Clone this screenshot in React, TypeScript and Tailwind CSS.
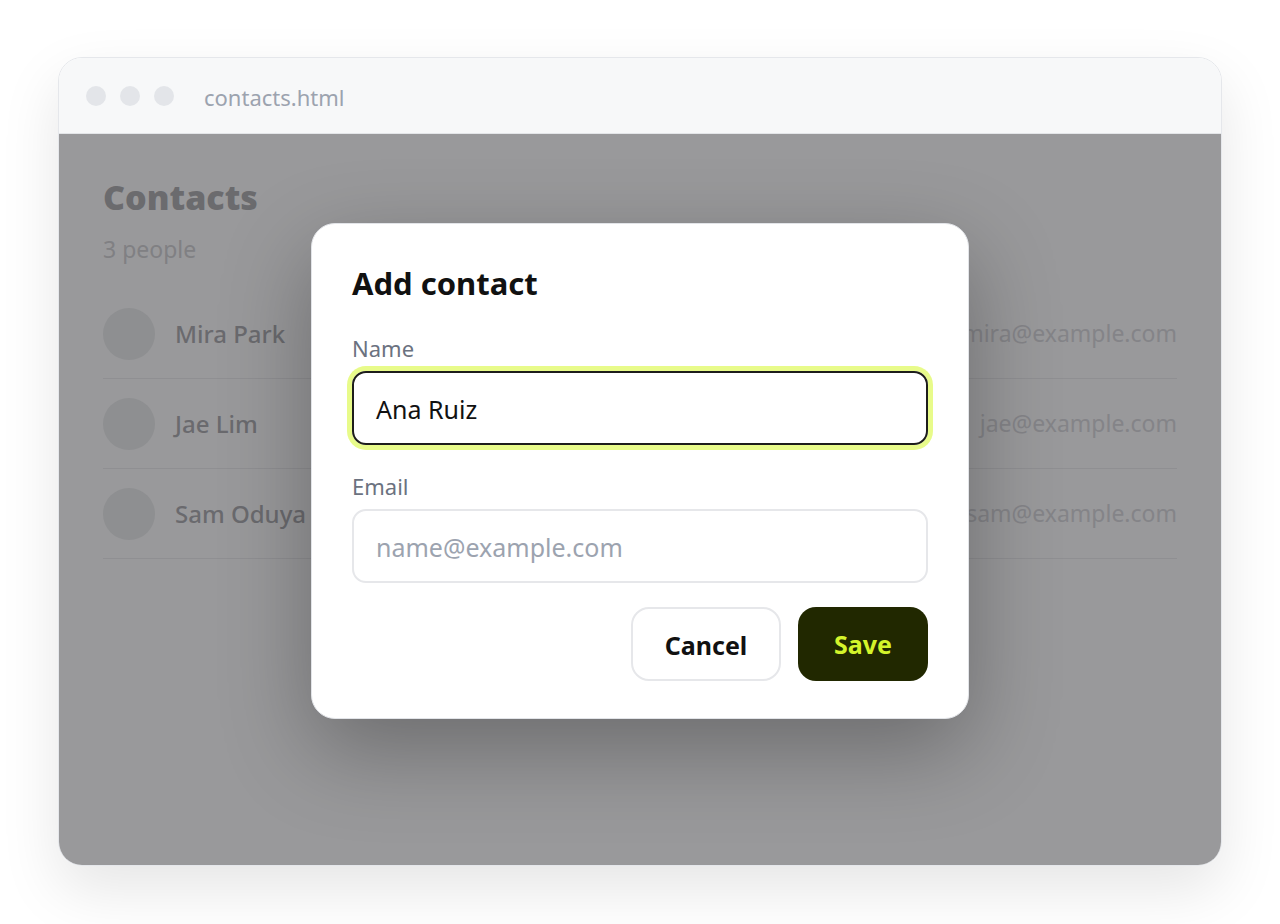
import React from "react";

const font = { fontFamily: '"Noto Sans", "Open Sans", sans-serif' };

const people = [
  { name: "Mira Park", email: "mira@example.com" },
  { name: "Jae Lim", email: "jae@example.com" },
  { name: "Sam Oduya", email: "sam@example.com" },
];

function TitleBar() {
  return (
    <div className="flex h-[76px] shrink-0 items-center border-b border-[#e3e5e8] bg-[#f7f8f9] px-[27px]">
      <div className="flex gap-[14px]">
        <span className="h-[20px] w-[20px] rounded-full bg-[#e3e5e9]" />
        <span className="h-[20px] w-[20px] rounded-full bg-[#e3e5e9]" />
        <span className="h-[20px] w-[20px] rounded-full bg-[#e3e5e9]" />
      </div>
      <span className="mt-[3px] ml-[30px] text-[22px] text-[#9ca3af]">contacts.html</span>
    </div>
  );
}

function ContactList() {
  return (
    <div className="px-[44px] pt-[43px]">
      <h1 className="text-[34px] leading-[40px] font-black text-[#6b6b6e]">Contacts</h1>
      <p className="mt-[17px] text-[23px] leading-[30px] text-[#808083]">3 people</p>
      <div className="mt-[25px]">
        {people.map((p) => (
          <div key={p.name} className="flex h-[90px] items-center border-b border-[#8f8f92]">
            <span className="h-[52px] w-[52px] shrink-0 rounded-full bg-[#8e8f91]" />
            <span className="ml-[20px] text-[24px] font-medium text-[#6a6a6e]">{p.name}</span>
            <span className="ml-auto text-[23px] text-[#848488]">{p.email}</span>
          </div>
        ))}
      </div>
    </div>
  );
}

function AddContactModal() {
  return (
    <div className="w-[658px] rounded-[24px] border border-[#e2e4e8] bg-white px-[40px] pt-[41px] pb-[37px] shadow-[0_30px_90px_rgba(0,0,0,0.3)]">
      <h2 className="text-[31px] leading-[36px] font-bold text-[#111111]">Add contact</h2>

      <label className="mt-[33px] block text-[22px] leading-[28px] text-[#6b7280]">Name</label>
      <div className="mt-[9px] flex h-[74px] items-center rounded-[14px] border-2 border-[#1d1d1b] px-[22px] pt-[3px] text-[25px] text-[#111111] ring-[5px] ring-[#e8fb8a]">
        Ana Ruiz
      </div>

      <label className="mt-[27px] block text-[22px] leading-[28px] text-[#6b7280]">Email</label>
      <div className="mt-[9px] flex h-[74px] items-center rounded-[14px] border-2 border-[#e6e7ea] px-[22px] pt-[3px] text-[25px] text-[#9ca3af]">
        name@example.com
      </div>

      <div className="mt-[24px] flex justify-end gap-[17px]">
        <button className="h-[74px] w-[150px] rounded-[18px] border-2 border-[#e6e7ea] bg-white pt-[3px] text-[25px] font-bold text-[#111111]">
          Cancel
        </button>
        <button className="h-[74px] w-[130px] rounded-[18px] bg-[#212800] pt-[1px] text-[25px] font-bold text-[#d4f42b]">
          Save
        </button>
      </div>
    </div>
  );
}

export default function App() {
  return (
    <div className="flex min-h-screen items-start justify-center bg-white pt-[57px]" style={font}>
      <div className="flex h-[809px] w-[1164px] flex-col overflow-hidden rounded-[24px] border border-[#e5e7eb] shadow-[0_24px_60px_rgba(0,0,0,0.1)]">
        <TitleBar />
        <div className="relative flex-1 bg-[#99999b]">
          <ContactList />
          {/* modal layer */}
          <div className="absolute inset-0 flex items-start justify-center pt-[89px]">
            <AddContactModal />
          </div>
        </div>
      </div>
    </div>
  );
}
